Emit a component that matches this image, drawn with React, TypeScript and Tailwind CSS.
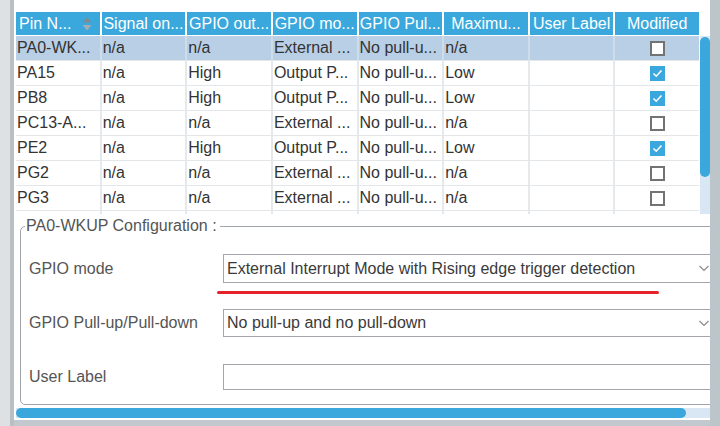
import React from "react";

type Row = {
  pin: string;
  signal: string;
  output: string;
  mode: string;
  pull: string;
  speed: string;
  modified: boolean;
  selected?: boolean;
};

const rows: Row[] = [
  { pin: "PA0-WK...", signal: "n/a", output: "n/a", mode: "External ...", pull: "No pull-u...", speed: "n/a", modified: false, selected: true },
  { pin: "PA15", signal: "n/a", output: "High", mode: "Output P...", pull: "No pull-u...", speed: "Low", modified: true },
  { pin: "PB8", signal: "n/a", output: "High", mode: "Output P...", pull: "No pull-u...", speed: "Low", modified: true },
  { pin: "PC13-A...", signal: "n/a", output: "n/a", mode: "External ...", pull: "No pull-u...", speed: "n/a", modified: false },
  { pin: "PE2", signal: "n/a", output: "High", mode: "Output P...", pull: "No pull-u...", speed: "Low", modified: true },
  { pin: "PG2", signal: "n/a", output: "n/a", mode: "External ...", pull: "No pull-u...", speed: "n/a", modified: false },
  { pin: "PG3", signal: "n/a", output: "n/a", mode: "External ...", pull: "No pull-u...", speed: "n/a", modified: false },
];

const headers = ["Signal on...", "GPIO out...", "GPIO mo...", "GPIO Pul...", "Maximu...", "User Label", "Modified"];

function SortIcon() {
  return (
    <svg width="10" height="16" viewBox="0 0 10 16">
      <polygon points="5,1 9.5,6.5 0.5,6.5" fill="#7d8b95" />
      <polygon points="0.5,9 9.5,9 5,14.5" fill="#a2adb5" />
    </svg>
  );
}

function Checkbox({ checked }: { checked: boolean }) {
  if (checked) {
    return (
      <div className="w-[15px] h-[15px] bg-[#3aa8dc] flex items-center justify-center">
        <svg width="15" height="15" viewBox="0 0 15 15">
          <polyline points="3.5,7.5 6.2,10.2 11.5,4.5" fill="none" stroke="white" strokeWidth="1.6" />
        </svg>
      </div>
    );
  }
  return <div className="w-[15px] h-[15px] border-2 border-[#737373] bg-white" />;
}

function Chevron() {
  return (
    <svg width="10" height="7" viewBox="0 0 10 7">
      <polyline points="0.5,1 5,5.5 9.5,1" fill="none" stroke="#8c8c8c" strokeWidth="1.2" />
    </svg>
  );
}

function FormRow({ label, value, height, select }: { label: string; value: string; height: string; select?: boolean }) {
  return (
    <div className="flex items-center">
      <div className="w-[202px] pl-[8px] text-[#555]">{label}</div>
      <div className={`w-[490px] ${height} border border-[#a3a7ab] bg-white flex items-center justify-between pl-[3px] pr-[3px] text-[#3a3a3a]`}>
        <span className="whitespace-nowrap">{value}</span>
        {select && <Chevron />}
      </div>
    </div>
  );
}

export default function App() {
  return (
    <div className="w-[720px] h-[426px] flex overflow-hidden bg-[#c1c9ce] font-['Liberation_Sans',Arial,sans-serif] text-[16px] leading-[18px] text-[#333]">
      <div className="w-[10px] bg-[#dde1e4]" />
      <div className="w-[4px] bg-[#b8c0c6]" />

      <div className="relative w-[696px] h-[420px] bg-white overflow-hidden flex flex-col">
        {/* table + vertical scrollbar */}
        <div className="flex pl-[2px] pt-[12px]">
          <div className="w-[683px]">
            <div className="grid grid-cols-8 gap-x-[2px] h-[23px] mb-[1px]">
              <div className="bg-[#3aa8dc] text-white flex items-center justify-between pl-[3px] pr-[8px] whitespace-nowrap overflow-hidden">
                <span>Pin N...</span>
                <SortIcon />
              </div>
              {headers.map((h) => (
                <div key={h} className="bg-[#3aa8dc] text-white flex items-center justify-center whitespace-nowrap overflow-hidden">
                  {h}
                </div>
              ))}
            </div>

            {rows.map((r) => {
              const cell = `${r.selected ? "bg-[#b9cfe6]" : "bg-white"} flex items-center pl-[1px] whitespace-nowrap overflow-hidden`;
              return (
                <div
                  key={r.pin}
                  className={`grid grid-cols-8 gap-x-[2px] h-[25px] border-b border-[#e3e7ea] ${r.selected ? "bg-[#cfdcea]" : "bg-[#e6e9ec]"}`}
                >
                  <div className={cell}>{r.pin}</div>
                  <div className={cell}>{r.signal}</div>
                  <div className={cell}>{r.output}</div>
                  <div className={cell}>{r.mode}</div>
                  <div className={cell}>{r.pull}</div>
                  <div className={cell}>{r.speed}</div>
                  <div className={cell} />
                  <div className={`${cell} justify-center`}>
                    <Checkbox checked={r.modified} />
                  </div>
                </div>
              );
            })}
            <div className="grid grid-cols-8 gap-x-[2px] h-[3px] bg-[#e6e9ec]">
              {Array.from({ length: 8 }).map((_, i) => (
                <div key={i} className="bg-white" />
              ))}
            </div>
          </div>

          <div className="w-[11px] pt-[24px] pl-[1px]">
            <div className="h-[178px] bg-[#d9e7f4] pt-[1px]">
              <div className="h-[140px] w-[10px] rounded-full bg-[#3aa8dc]" />
            </div>
          </div>
        </div>

        {/* configuration group */}
        <fieldset className="ml-[6px] mt-[3px] w-[760px] border border-[#a0a6ab] rounded-[5px]">
          <legend className="ml-[4px] pl-[1px] pr-[3px] text-[#555] leading-[18px]">PA0-WKUP Configuration :</legend>
          <div className="flex flex-col pt-[19px] pb-[14px]">
            <FormRow label="GPIO mode" value="External Interrupt Mode with Rising edge trigger detection" height="h-[29px]" select />
            <div className="h-[26px]" />
            <FormRow label="GPIO Pull-up/Pull-down" value="No pull-up and no pull-down" height="h-[28px]" select />
            <div className="h-[27px]" />
            <FormRow label="User Label" value="" height="h-[26px]" />
          </div>
        </fieldset>

        {/* horizontal scrollbar */}
        <div className="mt-auto mb-[2px] ml-[2px] h-[10px] bg-[#d9e7f4] flex">
          <div className="w-[670px] h-[10px] rounded-full bg-[#3aa8dc]" />
        </div>

        {/* red annotation underline */}
        <div className="absolute left-[203px] top-[291px] w-[442px] h-[3px] rounded-full bg-[#e8222b]" />
      </div>

      <div className="w-[10px] bg-[#bcc5ca]" />
    </div>
  );
}
